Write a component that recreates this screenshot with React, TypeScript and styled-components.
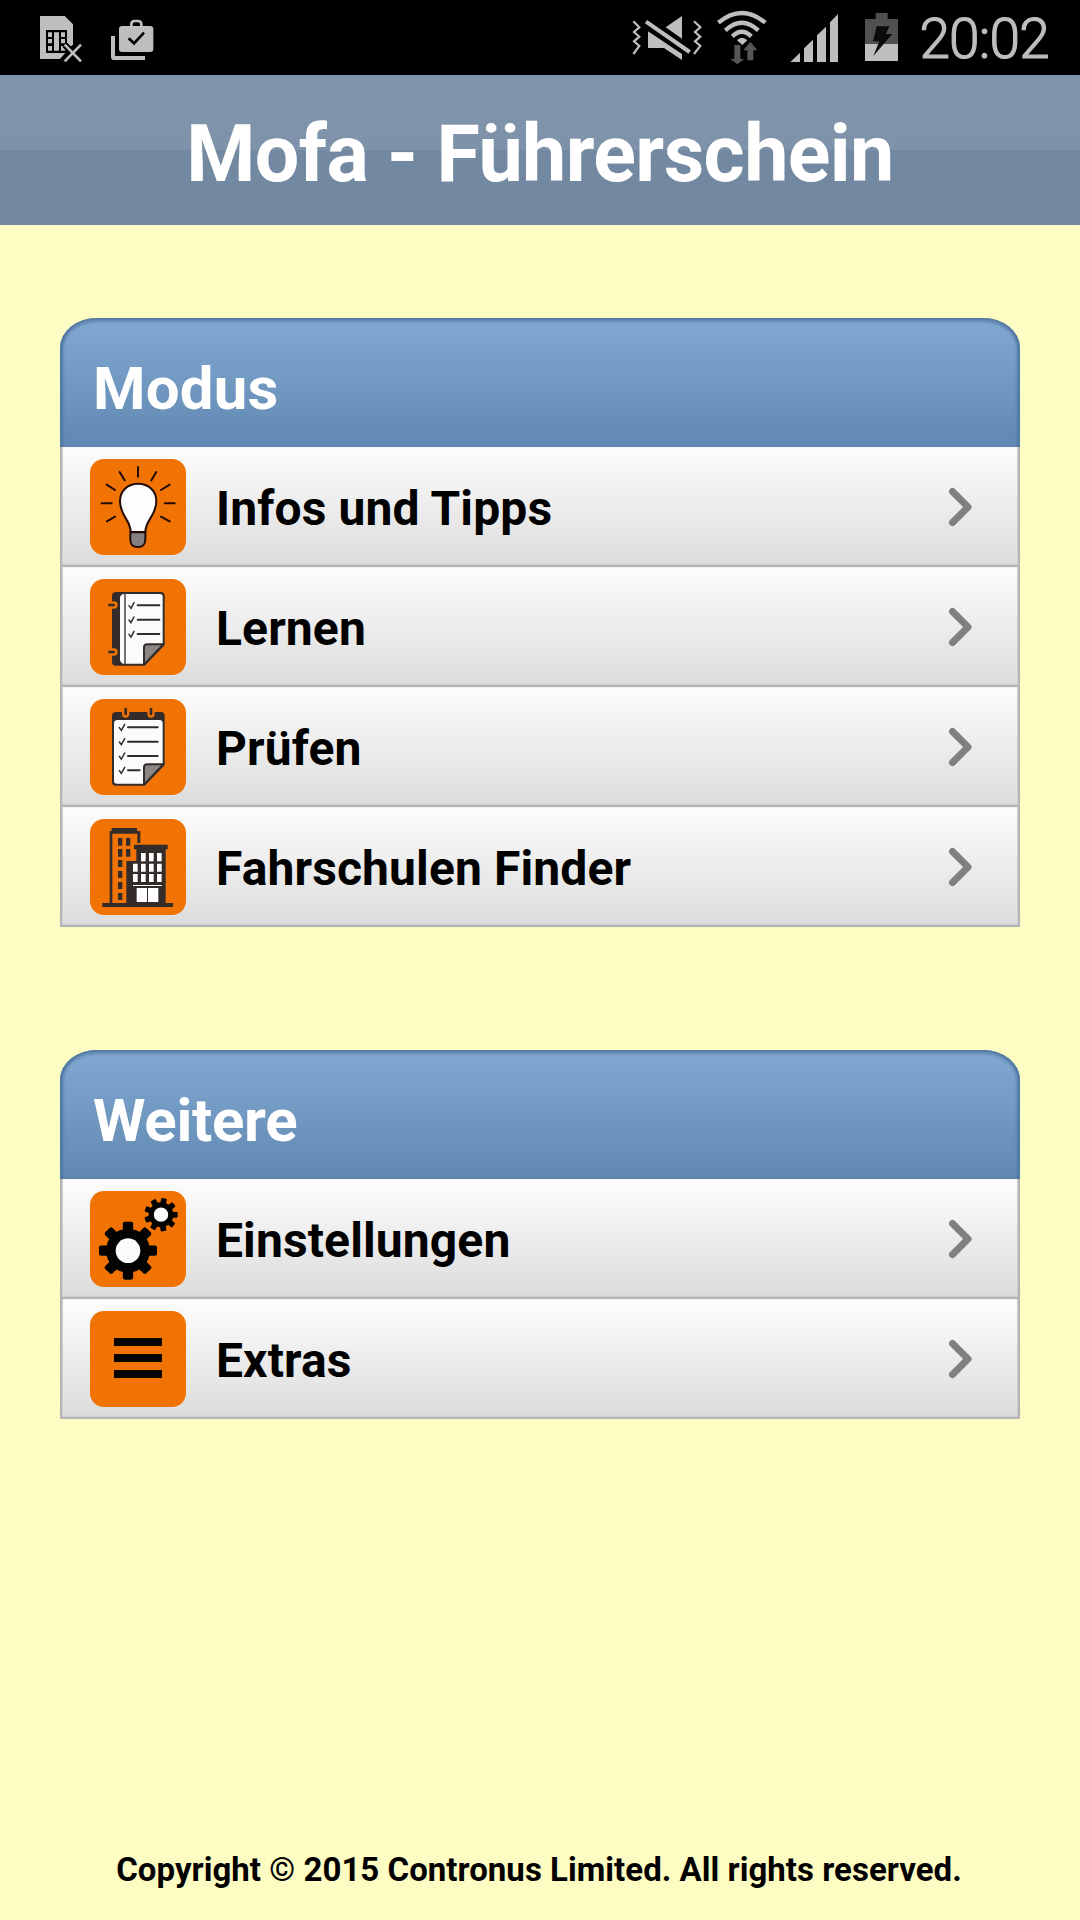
import React from "react";
import styled, { createGlobalStyle } from "styled-components";

const GlobalStyle = createGlobalStyle`
  html, body { margin: 0; padding: 0; background: #fdfcc2; }
  * { box-sizing: border-box; }
`;

const Screen = styled.div`
  width: 1080px;
  height: 1920px;
  display: flex;
  flex-direction: column;
  background: #fdfcc2;
  font-family: Roboto, "Liberation Sans", sans-serif;
  overflow: hidden;
`;

const StatusBar = styled.header`
  height: 75px;
  flex: none;
  display: flex;
  justify-content: space-between;
  padding: 0 31px 0 40px;
  background: #000;
`;

const StatusGroup = styled.div`
  display: flex;
`;

const StatusGlyph = styled.svg<{ $w: number; $after?: number }>`
  width: ${(p) => p.$w}px;
  height: 75px;
  margin-right: ${(p) => p.$after ?? 0}px;
  display: block;
`;

const Clock = styled.time`
  font-size: 55px;
  line-height: 79px;
  letter-spacing: -0.8px;
  font-weight: 300;
  color: #bebebe;
  -webkit-text-stroke: 1.2px #bebebe;
  white-space: nowrap;
`;

const TitleBar = styled.div`
  height: 150px;
  flex: none;
  display: flex;
  align-items: center;
  justify-content: center;
  background: linear-gradient(#8094ab 0, #7e93a9 50%, #7389a2 50%, #7288a0 100%);
`;

const Title = styled.h1`
  margin: 0;
  padding-top: 7px;
  font-size: 79px;
  line-height: 94px;
  letter-spacing: -0.62px;
  font-weight: 700;
  color: #fff;
  white-space: nowrap;
`;

const Content = styled.main`
  flex: 1;
  display: flex;
  flex-direction: column;
  gap: 123px;
  padding: 93px 60px 0;
`;

const PanelHeader = styled.div`
  height: 129px;
  display: flex;
  align-items: center;
  padding: 12px 33px 0;
  border-radius: 37px 37px 0 0 / 30px 30px 0 0;
  background: linear-gradient(#82a9d0, #6088b2);
  box-shadow: inset 0 4px 4px -1px #50759f, inset 5px 0 3px -2px #5279a5, inset -5px 0 3px -2px #5279a5;
`;

const PanelTitle = styled.h2<{ $tracking: number }>`
  margin: 0;
  font-size: 60px;
  line-height: 72px;
  letter-spacing: ${(p) => p.$tracking}px;
  font-weight: 700;
  color: #fff;
`;

const List = styled.ul`
  margin: 0;
  padding: 0;
  list-style: none;
`;

const Row = styled.li`
  height: 120px;
  display: flex;
  align-items: center;
  padding: 2px 46px 0 28px;
  border: solid #b4b4b4;
  border-width: 0 2px 2px;
  background: linear-gradient(#fdfdfd, #dcdcdc);
  box-shadow: inset 0 -1px 1px #cacaca, inset 1px 0 1px #d0d0d8, inset -1px 0 1px #d0d0d8;
`;

const Tile = styled.svg`
  width: 96px;
  height: 96px;
  flex: none;
  border-radius: 14px;
  background: #f07304;
`;

const RowLabel = styled.span`
  flex: 1;
  padding: 4px 0 0 30px;
  font-size: 48px;
  line-height: 58px;
  letter-spacing: 0.12px;
  font-weight: 700;
  color: #000;
`;

const Chevron = styled.svg`
  width: 24px;
  height: 40px;
  flex: none;
`;

const Footer = styled.footer`
  height: 100px;
  flex: none;
  display: flex;
  align-items: center;
  justify-content: center;
  padding-right: 2px;
  font-size: 33px;
  line-height: 38px;
  letter-spacing: 0.03px;
  font-weight: 700;
  color: #000;
  white-space: nowrap;
`;

const INK = "#332c2a";

const BulbIcon = () => (
  <Tile viewBox="30 27 288 288" fill="none" stroke="#210b05" strokeLinecap="round">
    <path
      d="M152 246C152 210 120 197 120 154C120 122 144 101 174 101C205 101 229 122 229 154C229 197 196 210 196 246Z"
      fill="#fdfdfd" strokeWidth="6" strokeLinejoin="round"
    />
    <path d="M151 247H196V269C196 284 186 291 174 291C161 291 151 284 151 269Z" fill="#858181" strokeWidth="6" strokeLinejoin="round" />
    <path d="M174 51V80M119 66L134 91M229 66L214 91M80 104L105 120M269 104L243 120M65 160H95M254 160H284M81 214L105 200M269 214L243 200" strokeWidth="6" />
  </Tile>
);

const FoldedCorner = () => (
  <path d="M192 284V232Q192 223 202 223H250Z" fill="#898583" stroke={INK} strokeWidth="6" strokeLinejoin="round" />
);

const NotebookIcon = () => (
  <Tile viewBox="30 27 288 288" fill="none">
    <path d="M108 66H242Q254 66 254 78V225L194 287H108Q96 287 96 275V78Q96 66 108 66Z" fill={INK} />
    <path d="M130 72H240Q248 72 248 80V223L192 281H130Q120 278 120 268V84Q120 75 130 72Z" fill="#fbfbfb" />
    <path d="M135 70V283" stroke={INK} strokeWidth="4" />
    <FoldedCorner />
    <path d="M85 105H102M85 246H102" stroke="#f07304" strokeWidth="22" strokeLinecap="round" />
    <path d="M88 105H101M88 246H101" stroke={INK} strokeWidth="8" strokeLinecap="round" />
    <path d="M173 106H238M173 149H238M173 192H238" stroke={INK} strokeWidth="6" strokeLinecap="round" />
    <path d="M147 107L153 115L162 98M147 150L153 158L162 141M147 193L153 201L162 184" stroke={INK} strokeWidth="4.5" strokeLinecap="round" />
  </Tile>
);

const ChecklistIcon = () => (
  <Tile viewBox="30 27 288 288" fill="none">
    <path d="M108 66H242Q254 66 254 78V225L194 287H108Q96 287 96 275V78Q96 66 108 66Z" fill={INK} />
    <path d="M112 90H238Q248 90 248 100V223L192 281H110Q102 281 102 273V100Q102 91 112 90Z" fill="#fbfbfb" />
    <FoldedCorner />
    <path d="M137 54V72M213 54V72" stroke="#f07304" strokeWidth="22" strokeLinecap="round" />
    <path d="M137 57V72M213 57V72" stroke={INK} strokeWidth="8" strokeLinecap="round" />
    <path d="M144 112H233M144 155H233M144 198H233M144 241H179" stroke={INK} strokeWidth="6" strokeLinecap="round" />
    <path d="M118 113L124 121L134 103M118 156L124 164L134 146M118 199L124 207L134 189M118 242L124 250L134 232" stroke={INK} strokeWidth="4.5" strokeLinecap="round" />
  </Tile>
);

const BuildingsIcon = () => (
  <Tile viewBox="30 27 288 288">
    <path
      d="M89 279V63H95V54H171V63H181V99H172V71H97V279H139V153H169V118H162V104H263V118H257V279H279V291H67V279Z"
      fill={INK}
    />
    {[84, 117].map((y) => (
      <path key={y} d={`M114 ${y}H127V${y + 23}H114ZM138 ${y}H151V${y + 23}H138Z`} fill={INK} />
    ))}
    {[150, 183, 216, 249].map((y) => (
      <rect key={y} x="114" y={y} width="13" height="21" fill={INK} />
    ))}
    {[183, 207, 231].map((x) => (
      <rect key={x} x={x} y="129" width="14" height="25" fill="#fff" />
    ))}
    {[159, 183, 207, 231].map((x) => (
      <path key={x} d={`M${x} 161h14v24h-14zM${x} 192h14v24h-14z`} fill="#fff" />
    ))}
    <path d="M159 225H246V228H159ZM170 234H201V276H170ZM204 234H235V276H204Z" fill="#fff" />
  </Tile>
);

type GearProps = { cx: number; cy: number; r: number; outer: number; hole: number; tooth: number; teeth: number; turn: number };

const Gear = ({ cx, cy, r, outer, hole, tooth, teeth, turn }: GearProps) => (
  <g transform={`translate(${cx} ${cy})`}>
    <circle r={r} fill="#050302" />
    {Array.from({ length: teeth }, (_, i) => (
      <rect
        key={i} x={-tooth / 2} y={-outer} width={tooth} height={outer} rx={tooth / 5}
        fill="#050302" transform={`rotate(${turn + (i * 360) / teeth})`}
      />
    ))}
    <circle r={hole} fill="#fbfbfb" />
  </g>
);

const GearsIcon = () => (
  <Tile viewBox="30 33 288 288">
    <Gear cx={144} cy={212} r={66} outer={87} hole={37} tooth={31} teeth={8} turn={0} />
    <Gear cx={243} cy={104} r={37} outer={50} hole={21.5} tooth={17} teeth={9} turn={11} />
  </Tile>
);

const MenuIcon = () => (
  <Tile viewBox="30 33 288 288">
    <path d="M102 114H246V138H102ZM102 162H246V186H102ZM102 210H246V234H102Z" fill="#050302" />
  </Tile>
);

const GREY = "#bebebe";

const SimErrorGlyph = () => (
  <StatusGlyph $w={43} $after={28} viewBox="120 0 129 225" fill="none">
    <path d="M120 48H194L219 73V133L180 177H120Z" fill={GREY} />
    <path d="M138 90H201V159H138Z" fill="#000" />
    <path d="M144 97H156V111H144ZM144 117H156V130H144ZM144 138H156V152H144ZM162 97H177V152H162ZM183 97H195V111H183ZM183 117H195V130H183ZM183 138H195V152H183Z" fill={GREY} />
    <path d="M194 134L244 184M244 134L194 184" stroke="#000" strokeWidth="19" />
    <path d="M194 134L243 184M243 134L194 184" stroke={GREY} strokeWidth="8" />
  </StatusGlyph>
);

const WorkDoneGlyph = () => (
  <StatusGlyph $w={43} viewBox="333 0 129 225" fill="none">
    <path d="M394 82V73Q394 63 404 63H414Q424 63 424 73V82" stroke={GREY} strokeWidth="8" />
    <rect x="357" y="78" width="103" height="78" rx="9" fill={GREY} />
    <path d="M386 115L402 130L432 98" stroke="#000" strokeWidth="8" />
    <path d="M333 108H345V168H435V180H343Q333 180 333 170Z" fill={GREY} />
  </StatusGlyph>
);

const MutedVibrateGlyph = () => (
  <StatusGlyph $w={70} $after={15} viewBox="36 0 210 225" fill="none">
    <path d="M40 64L48 72L58 82L42 96L58 110L42 124L58 138L40 162M222 64L241 82L225 96L241 110L225 124L241 138L222 162" stroke={GREY} strokeWidth="6.5" />
    <path d="M186 48V116L137 82ZM84 94L186 162V180L132 144H84Z" fill={GREY} />
    <path d="M78 65L209 156" stroke={GREY} strokeWidth="12" />
  </StatusGlyph>
);

const WifiGlyph = () => (
  <StatusGlyph $w={50} $after={23} viewBox="291 0 150 225" fill="none">
    <path d="M295 68Q365 10 436 68M316 91Q365 45 415 91M337 109Q365 82 394 109" stroke={GREY} strokeWidth="13" />
    <path d="M351 121Q365 106 382 121L367 135Z" fill={GREY} />
    <path d="M343 135H361V177H373L352 193L331 177H343ZM382 181V151H370L391 125L412 151H400V181Z" fill="#555" />
  </StatusGlyph>
);

const SignalGlyph = () => (
  <StatusGlyph $w={49} $after={26} viewBox="510 0 147 225">
    <path d="M511 186L540 158V186ZM552 186V145L579 119V186ZM591 186V106L618 80V186ZM630 186V67L654 42V186Z" fill={GREY} />
  </StatusGlyph>
);

const BatteryGlyph = () => (
  <StatusGlyph $w={33} $after={21} viewBox="735 0 99 225">
    <path d="M767 39H803V57H834V132H735V57H767Z" fill="#505050" />
    <path d="M735 132H834V183H735Z" fill={GREY} />
    <path d="M770 79H809L797 102H817L760 168L778 124H759Z" fill="#0b0b0b" />
  </StatusGlyph>
);

type Entry = { label: string; Icon: React.ComponentType };
type Section = { title: string; tracking: number; entries: Entry[] };

const SECTIONS: Section[] = [
  {
    title: "Modus",
    tracking: 0.2,
    entries: [
      { label: "Infos und Tipps", Icon: BulbIcon },
      { label: "Lernen", Icon: NotebookIcon },
      { label: "Prüfen", Icon: ChecklistIcon },
      { label: "Fahrschulen Finder", Icon: BuildingsIcon },
    ],
  },
  {
    title: "Weitere",
    tracking: -0.3,
    entries: [
      { label: "Einstellungen", Icon: GearsIcon },
      { label: "Extras", Icon: MenuIcon },
    ],
  },
];

export default function App() {
  return (
    <Screen>
      <GlobalStyle />
      <StatusBar>
        <StatusGroup>
          <SimErrorGlyph />
          <WorkDoneGlyph />
        </StatusGroup>
        <StatusGroup>
          <MutedVibrateGlyph />
          <WifiGlyph />
          <SignalGlyph />
          <BatteryGlyph />
          <Clock>20:02</Clock>
        </StatusGroup>
      </StatusBar>
      <TitleBar>
        <Title>Mofa - Führerschein</Title>
      </TitleBar>
      <Content>
        {SECTIONS.map(({ title, tracking, entries }) => (
          <section key={title}>
            <PanelHeader>
              <PanelTitle $tracking={tracking}>{title}</PanelTitle>
            </PanelHeader>
            <List>
              {entries.map(({ label, Icon }) => (
                <Row key={label}>
                  <Icon />
                  <RowLabel>{label}</RowLabel>
                  <Chevron viewBox="0 0 24 40" fill="none" stroke="#808080" strokeWidth="7" strokeLinecap="round" strokeLinejoin="round">
                    <path d="M4.5 4.5L20 20L4.5 35.5" />
                  </Chevron>
                </Row>
              ))}
            </List>
          </section>
        ))}
      </Content>
      <Footer>Copyright © 2015 Contronus Limited. All rights reserved.</Footer>
    </Screen>
  );
}
